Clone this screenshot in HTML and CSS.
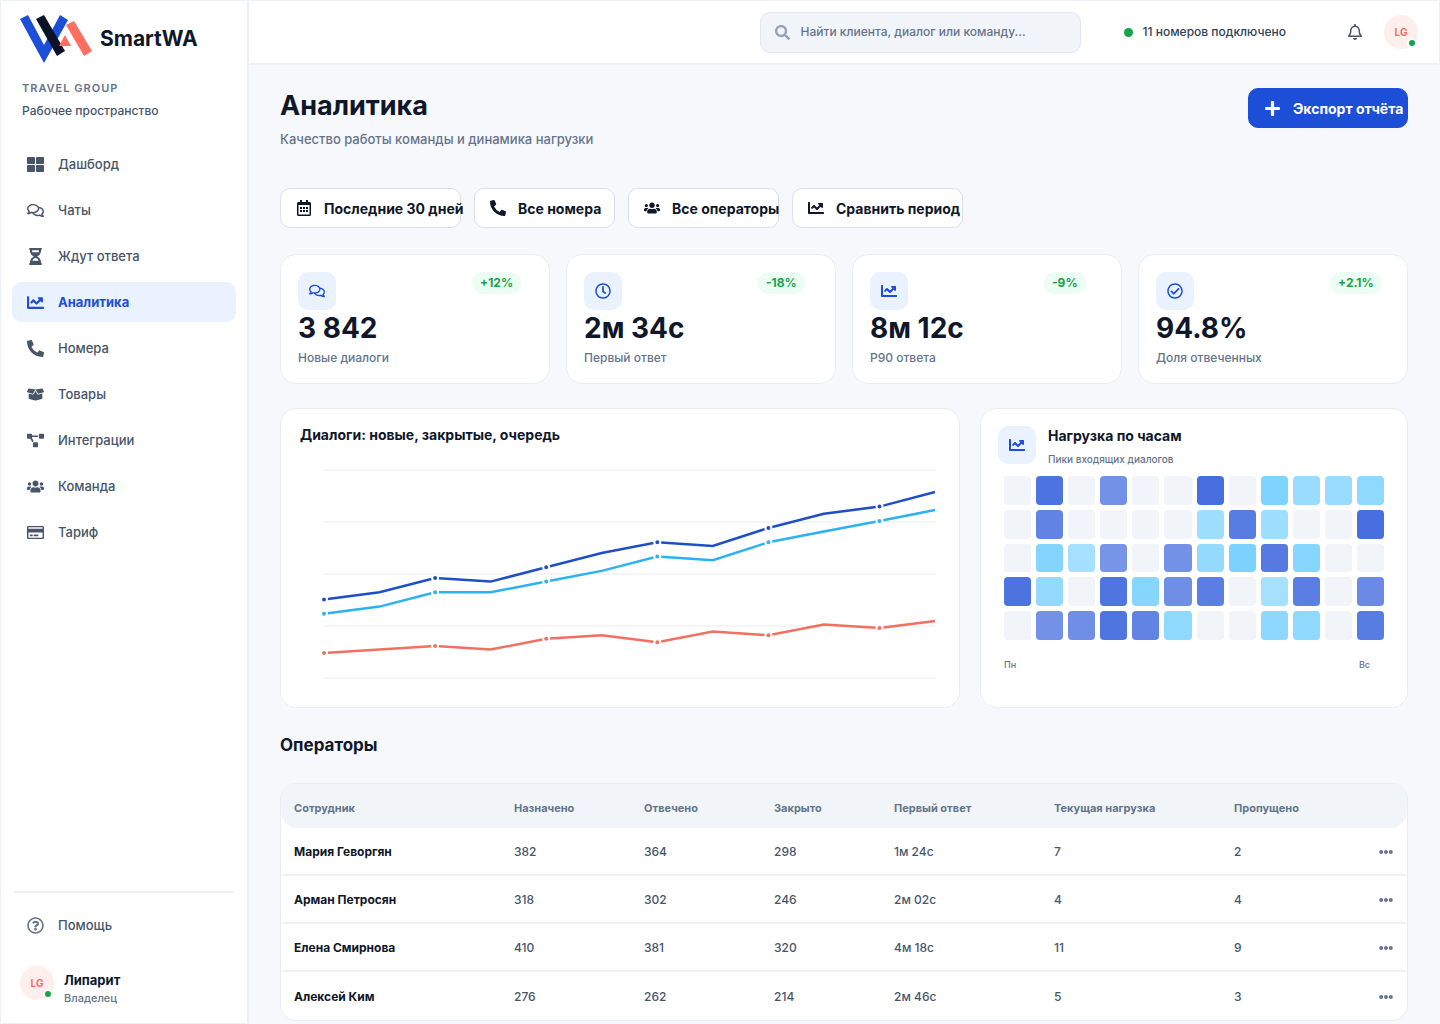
FILE: index.html
```html
<!DOCTYPE html>
<html lang="ru">
<head>
    <meta charset="UTF-8">
    <meta name="viewport" content="width=device-width, initial-scale=1.0">
    <title>SmartWA – Аналитика</title>
    <link rel="stylesheet" href="styles.css">
</head>
<body>

    <!-- Набор иконок -->
    <svg class="sprite" aria-hidden="true">
        <symbol id="i-grid" viewBox="0 0 512 512"><path d="M296 32h192c13.255 0 24 10.745 24 24v160c0 13.255-10.745 24-24 24H296c-13.255 0-24-10.745-24-24V56c0-13.255 10.745-24 24-24zm-80 0H24C10.745 32 0 42.745 0 56v160c0 13.255 10.745 24 24 24h192c13.255 0 24-10.745 24-24V56c0-13.255-10.745-24-24-24zM0 296v160c0 13.255 10.745 24 24 24h192c13.255 0 24-10.745 24-24V296c0-13.255-10.745-24-24-24H24c-13.255 0-24 10.745-24 24zm296 184h192c13.255 0 24-10.745 24-24V296c0-13.255-10.745-24-24-24H296c-13.255 0-24 10.745-24 24v160c0 13.255 10.745 24 24 24z"/></symbol>
        <symbol id="i-chats" viewBox="0 0 576 512"><path d="M532 386.2c27.5-27.1 44-61.1 44-98.2 0-80-76.5-146.1-176.2-157.9C368.3 72.5 294.3 32 208 32 93.1 32 0 103.6 0 192c0 37 16.5 71 44 98.2-15.3 30.7-37.3 54.5-37.7 54.9-6.3 6.7-8.1 16.5-4.4 25 3.6 8.5 12 14 21.2 14 53.5 0 96.7-20.2 125.2-38.8 9.2 2.1 18.7 3.7 28.4 4.9C208.1 407.6 281.8 448 368 448c20.8 0 40.8-2.4 59.8-6.8C456.3 459.7 499.4 480 553 480c9.2 0 17.5-5.5 21.2-14 3.6-8.5 1.9-18.3-4.4-25-.4-.3-22.500-24.1-37.8-54.8zm-392.8-92.3L122.1 305c-14.1 9.1-28.5 16.3-43.1 21.4 2.7-4.7 5.4-9.7 8-14.8l15.5-31.1L77.7 256C64.2 242.6 48 220.7 48 192c0-60.7 73.3-112 160-112s160 51.3 160 112-73.3 112-160 112c-16.5 0-33-1.900-49-5.6l-19.8-4.5zM498.3 352l-24.7 24.4 15.5 31.1c2.6 5.1 5.3 10.1 8 14.8-14.6-5.1-29-12.3-43.1-21.4l-17.1-11.1-19.9 4.6c-16 3.7-32.5 5.6-49 5.6-54 0-102.2-20.1-131.3-49.7C338 339.5 416 272.9 416 192c0-3.4-.4-6.7-.7-10C479.7 196.5 528 238.8 528 288c0 28.7-16.2 50.6-29.7 64z"/></symbol>
        <symbol id="i-hourglass" viewBox="0 0 384 512"><path d="M360 0H24C10.745 0 0 10.745 0 24v16c0 13.255 10.745 24 24 24 0 90.965 51.016 167.734 120.842 192C75.016 280.266 24 357.035 24 448c-13.255 0-24 10.745-24 24v16c0 13.255 10.745 24 24 24h336c13.255 0 24-10.745 24-24v-16c0-13.255-10.745-24-24-24 0-90.965-51.016-167.734-120.842-192C308.984 231.734 360 154.965 360 64c13.255 0 24-10.745 24-24V24c0-13.255-10.745-24-24-24zm-75.078 384H99.08c17.059-46.797 52.096-80 92.92-80 40.821 0 75.862 33.196 92.922 80zm.019-256H99.078C91.988 108.548 88 86.748 88 64h208c0 22.805-3.987 44.587-11.059 64z"/></symbol>
        <symbol id="i-chart" viewBox="0 0 512 512"><path d="M496 384H64V80c0-8.84-7.16-16-16-16H16C7.16 64 0 71.16 0 80v336c0 17.67 14.33 32 32 32h464c8.84 0 16-7.16 16-16v-32c0-8.84-7.16-16-16-16zM464 96H345.94c-21.38 0-32.09 25.85-16.97 40.97l32.4 32.4L288 242.75l-73.37-73.37c-12.5-12.5-32.76-12.5-45.25 0l-68.69 68.69c-6.25 6.25-6.25 16.38 0 22.63l22.62 22.62c6.25 6.25 16.38 6.25 22.63 0L192 237.25l73.37 73.37c12.5 12.5 32.76 12.5 45.25 0l96-96 32.4 32.4c15.12 15.12 40.97 4.41 40.97-16.97V112c.01-8.84-7.15-16-15.99-16z"/></symbol>
        <symbol id="i-phone" viewBox="0 0 512 512"><path d="M497.39 361.8l-112-48a24 24 0 0 0-28 6.9l-49.6 60.6A370.66 370.66 0 0 1 130.6 204.11l60.6-49.6a23.94 23.94 0 0 0 6.9-28l-48-112A24.16 24.16 0 0 0 122.6.61l-104 24A24 24 0 0 0 0 48c0 256.5 207.9 464 464 464a24 24 0 0 0 23.4-18.6l24-104a24.29 24.29 0 0 0-14.01-27.6z"/></symbol>
        <symbol id="i-box" viewBox="0 0 640 512"><path d="M425.7 256c-16.9 0-32.8-9-41.4-23.4L320 126l-64.2 106.6c-8.7 14.5-24.6 23.5-41.5 23.5-4.5 0-9-.6-13.3-1.9L64 215v178c0 14.7 10 27.5 24.2 31l216.2 54.1c10.2 2.5 20.9 2.5 31 0L551.8 424c14.2-3.6 24.2-16.4 24.2-31V215l-137 39.1c-4.3 1.3-8.8 1.9-13.3 1.9zm212.6-112.2L586.8 41c-3.1-6.2-9.8-9.8-16.7-8.9L320 64l91.7 152.1c3.8 6.3 11.4 9.3 18.5 7.3l197.9-56.5c9.9-2.9 14.7-13.9 10.2-23.1zM53.2 41L1.7 143.8c-4.6 9.2.3 20.2 10.1 23l197.9 56.5c7.1 2 14.7-1 18.5-7.3L320 64 69.8 32.1c-6.9-.8-13.5 2.7-16.6 8.9z"/></symbol>
        <symbol id="i-nodes" viewBox="0 0 640 512"><path d="M384 320H256c-17.67 0-32 14.33-32 32v128c0 17.67 14.33 32 32 32h128c17.67 0 32-14.33 32-32V352c0-17.67-14.33-32-32-32zM192 32c0-17.67-14.33-32-32-32H32C14.33 0 0 14.33 0 32v128c0 17.67 14.33 32 32 32h95.72l73.16 128.04C211.98 300.98 232.4 288 256 288h.28L192 175.51V128h224V64H192V32zM608 0H480c-17.67 0-32 14.33-32 32v128c0 17.67 14.33 32 32 32h128c17.67 0 32-14.33 32-32V32c0-17.67-14.33-32-32-32z"/></symbol>
        <symbol id="i-users" viewBox="0 0 640 512"><path d="M96 224c35.3 0 64-28.7 64-64s-28.7-64-64-64-64 28.7-64 64 28.7 64 64 64zm448 0c35.3 0 64-28.7 64-64s-28.7-64-64-64-64 28.7-64 64 28.7 64 64 64zm32 32h-64c-17.6 0-33.5 7.1-45.1 18.6 40.3 22.1 68.9 62 75.1 109.4h66c17.7 0 32-14.3 32-32v-32c0-35.3-28.7-64-64-64zm-256 0c61.9 0 112-50.1 112-112S381.9 32 320 32 208 82.1 208 144s50.1 112 112 112zm76.8 32h-8.3c-20.8 10-43.9 16-68.5 16s-47.6-6-68.5-16h-8.3C179.6 288 128 339.6 128 403.2V432c0 26.5 21.5 48 48 48h288c26.5 0 48-21.5 48-48v-28.8c0-63.6-51.6-115.2-115.2-115.2zm-223.7-13.4C161.5 263.1 145.6 256 128 256H64c-35.3 0-64 28.7-64 64v32c0 17.7 14.3 32 32 32h65.9c6.3-47.4 34.9-87.3 75.2-109.4z"/></symbol>
        <symbol id="i-card" viewBox="0 0 576 512"><path d="M527.9 32H48.1C21.5 32 0 53.5 0 80v352c0 26.5 21.5 48 48.1 48h479.8c26.6 0 48.1-21.5 48.1-48V80c0-26.5-21.5-48-48.1-48zM54.1 80h467.8c3.3 0 6 2.7 6 6v42H48.1V86c0-3.3 2.7-6 6-6zm467.8 352H54.1c-3.3 0-6-2.7-6-6V256h479.8v170c0 3.3-2.7 6-6 6zM192 332v40c0 6.6-5.4 12-12 12h-72c-6.6 0-12-5.4-12-12v-40c0-6.6 5.4-12 12-12h72c6.6 0 12 5.4 12 12zm192 0v40c0 6.6-5.4 12-12 12H236c-6.6 0-12-5.4-12-12v-40c0-6.6 5.4-12 12-12h136c6.6 0 12 5.4 12 12z"/></symbol>
        <symbol id="i-help" viewBox="0 0 512 512"><path d="M256 8C119.043 8 8 119.083 8 256c0 136.997 111.043 248 248 248s248-111.003 248-248C504 119.083 392.957 8 256 8zm0 448c-110.532 0-200-89.431-200-200 0-110.495 89.472-200 200-200 110.491 0 200 89.471 200 200 0 110.53-89.431 200-200 200zm107.244-255.2c0 67.052-72.421 68.084-72.421 92.863V300c0 6.627-5.373 12-12 12h-45.647c-6.627 0-12-5.373-12-12v-8.659c0-35.745 27.1-50.034 47.579-61.516 17.561-9.845 28.324-16.541 28.324-29.579 0-17.246-21.999-28.693-39.784-28.693-23.189 0-33.894 10.977-48.942 29.969-4.057 5.12-11.46 6.071-16.666 2.124l-27.824-21.098c-5.107-3.872-6.251-11.066-2.644-16.363C184.846 131.491 214.94 112 261.794 112c49.071 0 101.45 38.304 101.45 88.8zM298 368c0 23.159-18.841 42-42 42s-42-18.841-42-42 18.841-42 42-42 42 18.841 42 42z"/></symbol>
        <symbol id="i-bell" viewBox="0 0 448 512"><path d="M439.39 362.29c-19.32-20.76-55.47-51.99-55.47-154.29 0-77.7-54.48-139.9-127.94-155.16V32c0-17.67-14.32-32-31.98-32s-31.98 14.33-31.98 32v20.84C118.56 68.1 64.08 130.3 64.08 208c0 102.3-36.15 133.53-55.47 154.29-6 6.45-8.66 14.16-8.61 21.71.11 16.4 12.98 32 32.1 32h383.8c19.12 0 32-15.6 32.1-32 .05-7.55-2.61-15.27-8.61-21.71zM67.53 368c21.22-27.97 44.42-74.33 44.53-159.42 0-.2-.06-.38-.06-.58 0-61.86 50.14-112 112-112s112 50.14 112 112c0 .2-.06.38-.06.58.11 85.1 23.31 131.46 44.53 159.42H67.53zM224 512c35.32 0 63.97-28.65 63.97-64H160.03c0 35.35 28.65 64 63.97 64z"/></symbol>
        <symbol id="i-search" viewBox="0 0 512 512"><path d="M505 442.7L405.3 343c-4.5-4.5-10.6-7-17-7H372c27.6-35.3 44-79.7 44-128C416 93.1 322.9 0 208 0S0 93.1 0 208s93.1 208 208 208c48.3 0 92.7-16.4 128-44v16.3c0 6.4 2.5 12.5 7 17l99.7 99.7c9.4 9.4 24.6 9.4 33.9 0l28.3-28.3c9.4-9.4 9.4-24.6.1-34zM208 336c-70.7 0-128-57.2-128-128 0-70.7 57.2-128 128-128 70.7 0 128 57.2 128 128 0 70.7-57.2 128-128 128z"/></symbol>
        <symbol id="i-plus" viewBox="0 0 448 512"><path d="M416 208H272V64c0-17.67-14.33-32-32-32h-32c-17.67 0-32 14.33-32 32v144H32c-17.67 0-32 14.33-32 32v32c0 17.67 14.33 32 32 32h144v144c0 17.67 14.33 32 32 32h32c17.67 0 32-14.33 32-32V304h144c17.67 0 32-14.33 32-32v-32c0-17.67-14.33-32-32-32z"/></symbol>
        <symbol id="i-calendar" viewBox="0 0 448 512"><path d="M148 288h-40c-6.6 0-12-5.4-12-12v-40c0-6.6 5.4-12 12-12h40c6.6 0 12 5.4 12 12v40c0 6.6-5.4 12-12 12zm108-12v-40c0-6.6-5.4-12-12-12h-40c-6.6 0-12 5.4-12 12v40c0 6.6 5.4 12 12 12h40c6.6 0 12-5.4 12-12zm96 0v-40c0-6.6-5.4-12-12-12h-40c-6.6 0-12 5.4-12 12v40c0 6.6 5.4 12 12 12h40c6.6 0 12-5.4 12-12zm-96 96v-40c0-6.6-5.4-12-12-12h-40c-6.6 0-12 5.4-12 12v40c0 6.6 5.4 12 12 12h40c6.6 0 12-5.4 12-12zm-96 0v-40c0-6.6-5.4-12-12-12h-40c-6.6 0-12 5.4-12 12v40c0 6.6 5.4 12 12 12h40c6.6 0 12-5.4 12-12zm192 0v-40c0-6.6-5.4-12-12-12h-40c-6.6 0-12 5.4-12 12v40c0 6.6 5.4 12 12 12h40c6.6 0 12-5.4 12-12zm96-260v352c0 26.5-21.5 48-48 48H48c-26.5 0-48-21.5-48-48V112c0-26.5 21.5-48 48-48h48V12c0-6.6 5.4-12 12-12h40c6.6 0 12 5.4 12 12v52h128V12c0-6.6 5.4-12 12-12h40c6.6 0 12 5.4 12 12v52h48c26.5 0 48 21.5 48 48zm-48 346V160H48v298c0 3.3 2.7 6 6 6h340c3.3 0 6-2.7 6-6z"/></symbol>
        <symbol id="i-clock" viewBox="0 0 512 512"><path d="M256 8C119 8 8 119 8 256s111 248 248 248 248-111 248-248S393 8 256 8zm0 448c-110.5 0-200-89.5-200-200S145.5 56 256 56s200 89.5 200 200-89.5 200-200 200zm61.8-104.4l-84.9-61.7c-3.1-2.3-4.9-5.9-4.9-9.7V116c0-6.6 5.4-12 12-12h32c6.6 0 12 5.4 12 12v141.7l66.8 48.6c5.4 3.9 6.5 11.4 2.6 16.8L334.6 349c-3.9 5.3-11.4 6.5-16.8 2.6z"/></symbol>
        <symbol id="i-check" viewBox="0 0 512 512"><path d="M256 8C119.033 8 8 119.033 8 256s111.033 248 248 248 248-111.033 248-248S392.967 8 256 8zm0 48c110.532 0 200 89.451 200 200 0 110.532-89.451 200-200 200-110.532 0-200-89.451-200-200 0-110.532 89.451-200 200-200m140.204 130.267l-22.536-22.718c-4.667-4.705-12.265-4.736-16.97-.068L215.346 303.697l-59.792-60.277c-4.667-4.705-12.265-4.736-16.97-.069l-22.719 22.536c-4.705 4.667-4.736 12.265-.068 16.971l90.781 91.516c4.667 4.705 12.265 4.736 16.97.068l172.589-171.204c4.704-4.668 4.734-12.266.067-16.971z"/></symbol>
        <symbol id="i-dots" viewBox="0 0 512 512"><path d="M328 256c0 39.8-32.2 72-72 72s-72-32.2-72-72 32.2-72 72-72 72 32.2 72 72zm104-72c-39.8 0-72 32.2-72 72s32.2 72 72 72 72-32.2 72-72-32.2-72-72-72zm-352 0c-39.8 0-72 32.2-72 72s32.2 72 72 72 72-32.2 72-72-32.2-72-72-72z"/></symbol>
    </svg>

    <div class="app">

        <!-- Боковое меню -->
        <aside class="sidebar">
            <a class="brand" href="#">
                <svg class="logo" viewBox="0 0 72 48" aria-hidden="true">
                    <path fill="#1d4ed8" d="M0 4L8 0l16 30L40 0l8 5-24 43z"/>
                    <path fill="#0b1228" d="M16 4l8-4 21 36-8 5z"/>
                    <path fill="#ff6f61" d="M46 10l8-4 18 30-8 5z"/>
                    <path fill="#ff6f61" d="M45 20l6 11H39z"/>
                </svg>
                <span>SmartWA</span>
            </a>
            <div class="workspace">
                <div class="workspace-name">TRAVEL GROUP</div>
                <div class="workspace-label">Рабочее пространство</div>
            </div>
            <nav class="nav">
                <a href="#"><svg><use href="#i-grid"/></svg>Дашборд</a>
                <a href="#"><svg><use href="#i-chats"/></svg>Чаты</a>
                <a href="#"><svg><use href="#i-hourglass"/></svg>Ждут ответа</a>
                <a href="#" class="active"><svg><use href="#i-chart"/></svg>Аналитика</a>
                <a href="#"><svg><use href="#i-phone"/></svg>Номера</a>
                <a href="#"><svg><use href="#i-box"/></svg>Товары</a>
                <a href="#"><svg><use href="#i-nodes"/></svg>Интеграции</a>
                <a href="#"><svg><use href="#i-users"/></svg>Команда</a>
                <a href="#"><svg><use href="#i-card"/></svg>Тариф</a>
            </nav>
            <div class="sidebar-bottom">
                <nav class="nav nav-help">
                    <a href="#"><svg><use href="#i-help"/></svg>Помощь</a>
                </nav>
                <div class="user">
                    <span class="avatar">LG</span>
                    <div>
                        <div class="user-name">Липарит</div>
                        <div class="user-role">Владелец</div>
                    </div>
                </div>
            </div>
        </aside>

        <div class="page">

            <!-- Верхняя панель -->
            <header class="topbar">
                <label class="search">
                    <svg><use href="#i-search"/></svg>
                    <input type="text" placeholder="Найти клиента, диалог или команду..." aria-label="Поиск">
                </label>
                <div class="status">11 номеров подключено</div>
                <button class="bell" type="button" aria-label="Уведомления"><svg><use href="#i-bell"/></svg></button>
                <span class="avatar">LG</span>
            </header>

            <main class="content">
                <div class="page-head">
                    <div>
                        <h1>Аналитика</h1>
                        <p>Качество работы команды и динамика нагрузки</p>
                    </div>
                    <button class="btn btn-primary" type="button"><svg><use href="#i-plus"/></svg>Экспорт отчёта</button>
                </div>

                <div class="filters">
                    <button class="btn btn-period" type="button"><svg><use href="#i-calendar"/></svg>Последние 30 дней</button>
                    <button class="btn btn-numbers" type="button"><svg><use href="#i-phone"/></svg>Все номера</button>
                    <button class="btn btn-operators" type="button"><svg><use href="#i-users"/></svg>Все операторы</button>
                    <button class="btn btn-compare" type="button"><svg><use href="#i-chart"/></svg>Сравнить период</button>
                </div>

                <!-- Показатели -->
                <section class="kpis">
                    <article class="card kpi">
                        <div class="kpi-top"><span class="tile"><svg><use href="#i-chats"/></svg></span><div class="kpi-delta"><span>+12%</span></div></div>
                        <div class="kpi-value">3 842</div>
                        <div class="kpi-label">Новые диалоги</div>
                    </article>
                    <article class="card kpi">
                        <div class="kpi-top"><span class="tile"><svg><use href="#i-clock"/></svg></span><div class="kpi-delta"><span>-18%</span></div></div>
                        <div class="kpi-value">2м 34с</div>
                        <div class="kpi-label">Первый ответ</div>
                    </article>
                    <article class="card kpi">
                        <div class="kpi-top"><span class="tile"><svg><use href="#i-chart"/></svg></span><div class="kpi-delta"><span>-9%</span></div></div>
                        <div class="kpi-value">8м 12с</div>
                        <div class="kpi-label">P90 ответа</div>
                    </article>
                    <article class="card kpi">
                        <div class="kpi-top"><span class="tile"><svg><use href="#i-check"/></svg></span><div class="kpi-delta"><span>+2.1%</span></div></div>
                        <div class="kpi-value">94.8%</div>
                        <div class="kpi-label">Доля отвеченных</div>
                    </article>
                </section>

                <section class="charts">
                    <article class="card line-card">
                        <h3>Диалоги: новые, закрытые, очередь</h3>
                        <svg class="line-chart" id="lineChart" viewBox="0 0 640 220" role="img" aria-label="График диалогов">
                            <path class="grid-line" d="M24 10h611M24 62h611M24 114h611M24 166h611M24 218h611"/>
                        </svg>
                    </article>
                    <article class="card heat-card">
                        <div class="heat-head">
                            <span class="tile"><svg><use href="#i-chart"/></svg></span>
                            <div>
                                <h3>Нагрузка по часам</h3>
                                <p>Пики входящих диалогов</p>
                            </div>
                        </div>
                        <div class="heatmap" id="heatmap"></div>
                        <div class="heat-days"><span>Пн</span><span>Вс</span></div>
                    </article>
                </section>

                <h2>Операторы</h2>
                <div class="card table-card">
                    <table>
                        <colgroup>
                            <col class="col-name"><col class="col-num"><col class="col-num"><col class="col-closed">
                            <col class="col-first"><col class="col-load"><col><col class="col-menu">
                        </colgroup>
                        <thead>
                            <tr><th>Сотрудник</th><th>Назначено</th><th>Отвечено</th><th>Закрыто</th><th>Первый ответ</th><th>Текущая нагрузка</th><th>Пропущено</th><th></th></tr>
                        </thead>
                        <tbody>
                            <tr><td>Мария Геворгян</td><td>382</td><td>364</td><td>298</td><td>1м 24с</td><td>7</td><td>2</td><td><button class="more" type="button" aria-label="Ещё"><svg><use href="#i-dots"/></svg></button></td></tr>
                            <tr><td>Арман Петросян</td><td>318</td><td>302</td><td>246</td><td>2м 02с</td><td>4</td><td>4</td><td><button class="more" type="button" aria-label="Ещё"><svg><use href="#i-dots"/></svg></button></td></tr>
                            <tr><td>Елена Смирнова</td><td>410</td><td>381</td><td>320</td><td>4м 18с</td><td>11</td><td>9</td><td><button class="more" type="button" aria-label="Ещё"><svg><use href="#i-dots"/></svg></button></td></tr>
                            <tr><td>Алексей Ким</td><td>276</td><td>262</td><td>214</td><td>2м 46с</td><td>5</td><td>3</td><td><button class="more" type="button" aria-label="Ещё"><svg><use href="#i-dots"/></svg></button></td></tr>
                        </tbody>
                    </table>
                </div>
            </main>
        </div>
    </div>

    <script>
        // Линейный график
        const series = [
            { name: "new", y: [139.5, 132.3, 118, 121.6, 107.3, 93, 82.3, 85.9, 68, 53.7, 46.6, 32] },
            { name: "closed", y: [153.8, 146.6, 132.3, 132.3, 121.6, 110.9, 96.6, 100.2, 82.3, 71.6, 60.9, 50] },
            { name: "queue", y: [193, 189.5, 186, 189.5, 178.8, 175.2, 182.3, 171.6, 175.2, 164.5, 168, 161] }
        ];
        const step = 611 / 11;
        let chart = "";
        series.forEach(s => {
            const points = s.y.map((y, i) => [(24 + i * step).toFixed(1), y]);
            chart += `<polyline class="line ${s.name}" points="${points.join(" ")}"/>`;
            points.filter((p, i) => i % 2 === 0).forEach(p => {
                chart += `<circle class="dot ${s.name}" cx="${p[0]}" cy="${p[1]}" r="3"/>`;
            });
        });
        document.getElementById("lineChart").innerHTML += chart;

        // Тепловая карта: b - высокая нагрузка, s - средняя, 0 - пусто
        const load = [
            "0 b79 0 b62 0 0 b82 0 s60 s48 s48 s52",
            "0 b70 0 0 0 0 s45 b74 s45 0 0 b81",
            "0 s58 s42 b60 0 b62 s50 s61 b75 s56 0 0",
            "b79 s50 0 b78 s56 b64 b73 0 s42 b73 0 b66",
            "0 b62 b64 b78 b70 s52 0 0 s53 s52 0 b74"
        ];
        document.getElementById("heatmap").innerHTML = load.join(" ").split(" ").map(v => {
            if (v === "0") return '<span class="cell"></span>';
            const kind = v[0] === "b" ? "high" : "mid";
            return `<span class="cell ${kind}" style="opacity: ${v.slice(1) / 100}"></span>`;
        }).join("");
    </script>

</body>
</html>
```
FILE: styles.css
```css
* { box-sizing: border-box; }
body { margin: 0; background: #f7f8fc; color: #0f172a; font-family: Inter, "Noto Sans", sans-serif; font-size: 12px; font-weight: 500; line-height: 16px; }
h1, h2, h3, p { margin: 0; }
a { color: inherit; text-decoration: none; }
button { font-family: inherit; cursor: pointer; }
svg { display: block; fill: currentColor; flex: none; }
.sprite { display: none; }

.app { display: flex; min-height: 100vh; }
.page { flex: 1; min-width: 0; }

/* Боковое меню */
.sidebar { width: 249px; flex: none; display: flex; flex-direction: column; background: #fff; border: 1px solid #edf0f4; border-right-width: 2px; }
.brand { display: flex; align-items: center; gap: 8px; padding: 14px 19px 0; font-size: 21px; line-height: 28px; font-weight: 700; }
.logo { width: 72px; height: 48px; }
.workspace { padding: 17px 21px 0; }
.workspace-name { font-size: 11px; font-weight: 600; letter-spacing: 1px; color: #64748b; }
.workspace-label { margin-top: 7px; color: #475569; }
.nav { display: flex; flex-direction: column; gap: 6px; padding: 25px 11px 0; }
.nav a { display: flex; align-items: center; gap: 14px; height: 40px; padding-left: 15px; border-radius: 10px; font-size: 13px; color: #475569; }
.nav svg { width: 17px; height: 17px; }
.nav a.active { background: #eaf1ff; color: #1d4ed8; font-weight: 700; }
.sidebar-bottom { margin-top: auto; padding-bottom: 17px; }
.nav-help { margin: 0 13px; padding: 12px 0 0; border-top: 2px solid #edf0f4; }
.nav-help a { padding-left: 13px; }
.nav-help svg { color: #64748b; }
.user { display: flex; gap: 10px; padding: 21px 19px 0; }
.user-name { margin-top: 6px; font-size: 13px; font-weight: 700; }
.user-role { margin-top: 2px; font-size: 11px; color: #64748b; }

.avatar { position: relative; width: 34px; height: 34px; flex: none; border-radius: 50%; background: #ffefec; color: #f26d60; font-size: 10px; font-weight: 700; line-height: 34px; text-align: center; }
.avatar::after { content: ""; position: absolute; right: 1px; bottom: 1px; width: 6px; height: 6px; border: 2px solid #fff; border-radius: 50%; background: #16a34a; }

/* Верхняя панель */
.topbar { display: flex; align-items: center; justify-content: flex-end; height: 65px; padding-right: 21px; background: #fff; border: 1px solid #edf0f4; border-width: 1px 1px 2px 0; }
.search { display: flex; align-items: center; gap: 11px; width: 321px; height: 41px; padding: 0 14px; border: 1px solid #e2e8f0; border-radius: 10px; background: #f1f5f9; color: #94a3b8; }
.search svg { width: 15px; height: 15px; }
.search input { flex: 1; min-width: 0; padding: 0; border: 0; outline: 0; background: none; font: inherit; color: #0f172a; }
.search input::placeholder { color: #64748b; opacity: 1; }
.status { display: flex; align-items: center; gap: 10px; margin-left: 43px; color: #334155; white-space: nowrap; }
.status::before { content: ""; width: 9px; height: 9px; border-radius: 50%; background: #16a34a; }
.bell { margin: 0 21px 0 61px; padding: 0; border: 0; background: none; color: #475569; }
.bell svg { width: 16px; height: 16px; }

.content { padding: 23px 32px 0 31px; }
.page-head { display: flex; justify-content: space-between; align-items: flex-start; }
h1 { font-size: 27px; line-height: 36px; font-weight: 700; }
.page-head p { margin-top: 5px; font-size: 13px; line-height: 20px; color: #64748b; }

.btn { display: flex; align-items: center; gap: 12px; height: 40px; padding: 0 0 0 15px; border: 1px solid #d9e0ea; border-radius: 10px; background: #fff; color: #0f172a; font-size: 14px; font-weight: 700; white-space: nowrap; }
.btn svg { width: 16px; height: 16px; }
.btn-primary { width: 160px; border-color: #1d4ed8; background: #1d4ed8; color: #fff; }
.btn-primary svg { width: 17px; height: 17px; }
.filters { display: flex; gap: 13px; margin-top: 39px; }
.btn-period { width: 181px; }
.btn-numbers { width: 141px; }
.btn-operators { width: 151px; }
.btn-compare { width: 171px; }

.card { background: #fff; border: 1px solid #e9edf3; border-radius: 16px; }
.tile { display: flex; align-items: center; justify-content: center; width: 38px; height: 38px; border-radius: 10px; background: #eaf1ff; color: #1d4ed8; }
.tile svg { width: 16px; height: 16px; }

/* Показатели */
.kpis { display: grid; grid-template-columns: repeat(4, 1fr); gap: 16px; margin-top: 26px; }
.kpi { padding: 17px; }
.kpi-top { display: flex; justify-content: space-between; align-items: flex-start; }
.kpi-delta { width: 60px; }
.kpi-delta span { display: inline-block; padding: 0 8px; border-radius: 11px; background: #ecfdf3; color: #16a34a; font-weight: 700; line-height: 22px; }
.kpi-value { font-size: 28px; line-height: 36px; font-weight: 700; }
.kpi-label { margin-top: 4px; color: #64748b; }

/* Графики */
.charts { display: grid; grid-template-columns: 680fr 428fr; gap: 20px; margin-top: 24px; }
h3 { font-size: 14px; line-height: 20px; font-weight: 700; }
.line-card { padding: 16px 19px 27px; }
.line-chart { width: 100%; height: auto; margin-top: 15px; }
.grid-line { fill: none; stroke: #f3f5f8; stroke-width: 2; }
.line { fill: none; stroke-width: 2.5; }
.line.new { stroke: #1e4fc9; }
.line.closed { stroke: #2bb1f5; }
.line.queue { stroke: #f26f61; }
.dot { stroke: #fff; stroke-width: 2; }
.dot.new { fill: #1e4fc9; }
.dot.closed { fill: #2bb1f5; }
.dot.queue { fill: #f26f61; }

.heat-card { padding: 17px 23px 0; }
.heat-head { display: flex; gap: 12px; margin-left: -6px; }
.heat-head p { margin-top: 5px; font-size: 10px; color: #64748b; }
.heatmap { display: grid; grid-template-columns: repeat(12, 1fr); grid-template-rows: repeat(5, 1fr); gap: 5px; height: 164px; margin-top: 9px; }
.cell { border-radius: 4px; background: #f1f5f9; }
.cell.high { background: #1d4ed8; }
.cell.mid { background: #29b6ff; }
.heat-days { display: flex; justify-content: space-between; margin-top: 17px; padding-right: 14px; font-size: 9px; color: #64748b; }

/* Операторы */
h2 { margin-top: 25px; font-size: 17px; line-height: 24px; font-weight: 700; }
.table-card { margin-top: 26px; overflow: hidden; }
table { width: 100%; table-layout: fixed; border-collapse: separate; border-spacing: 0; }
.col-name { width: 220px; }
.col-num { width: 130px; }
.col-closed { width: 120px; }
.col-first { width: 160px; }
.col-load { width: 180px; }
.col-menu { width: 41px; }
th, td { padding: 0 0 0 13px; text-align: left; white-space: nowrap; }
th { height: 44px; padding-top: 4px; background: #f1f5f9; color: #64748b; font-size: 11px; font-weight: 700; }
th:first-child { border-bottom-left-radius: 16px; }
th:last-child { border-bottom-right-radius: 16px; }
td { height: 48px; padding-top: 2px; border-bottom: 2px solid #eef1f5; color: #475569; }
tr:last-child td { border-bottom: 0; }
td:first-child { color: #0f172a; font-weight: 700; }
.more { display: block; padding: 0; border: 0; background: none; color: #64748b; }
.more svg { width: 14px; height: 14px; }
```
